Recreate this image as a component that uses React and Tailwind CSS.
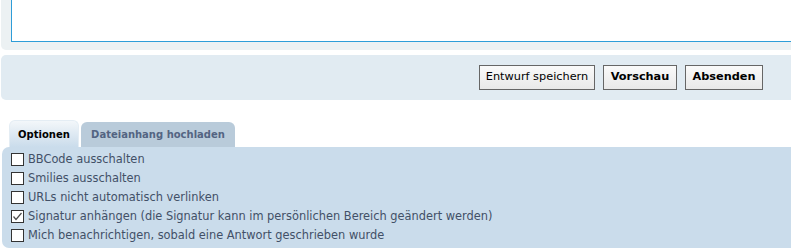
import React from 'react';

const options = [
  { label: 'BBCode ausschalten', checked: false },
  { label: 'Smilies ausschalten', checked: false },
  { label: 'URLs nicht automatisch verlinken', checked: false },
  { label: 'Signatur anhängen (die Signatur kann im persönlichen Bereich geändert werden)', checked: true },
  { label: 'Mich benachrichtigen, sobald eine Antwort geschrieben wurde', checked: false },
];

const Checkbox = ({ checked }) => (
  <span className="w-[13px] h-[13px] shrink-0 bg-white border border-[#333] flex items-center justify-center">
    {checked && (
      <svg width="11" height="11" viewBox="0 0 11 11">
        <path d="M1.5 5.5 L4 8.5 L9.5 2" fill="none" stroke="#4a4a4a" strokeWidth="1.2" />
      </svg>
    )}
  </span>
);

export default function App() {
  return (
    <div className="w-full bg-white font-['Verdana','DejaVu_Sans',sans-serif] text-[11px]">
      {/* Message panel */}
      <div className="ml-[1px] bg-[#ecf1f3] rounded-bl-[5px] pl-[10px] pb-[8px]">
        <div className="h-[42px] bg-white border-l border-b border-[#2e9dd8]" />
      </div>

      {/* Submit buttons */}
      <div className="ml-[1px] mt-[5px] h-[45px] bg-[#e1ebf2] rounded-l-[5px] flex justify-end items-start pt-[10px] pr-[28px] gap-[8px] text-[11.3px]">
        <button className="w-[116px] h-[25px] border border-[#666] bg-gradient-to-b from-[#fafafa] to-[#e9e9e9] text-black">
          Entwurf speichern
        </button>
        <button className="w-[74px] h-[25px] border border-[#666] bg-gradient-to-b from-[#fafafa] to-[#e9e9e9] text-black font-bold">
          Vorschau
        </button>
        <button className="w-[78px] h-[25px] border border-[#666] bg-gradient-to-b from-[#fafafa] to-[#e9e9e9] text-black font-bold">
          Absenden
        </button>
      </div>

      {/* Tabs */}
      <div className="mt-[20px] pl-[9px] flex items-end gap-[2px] text-[10px]">
        <div className="w-[70px] h-[27px] rounded-t-[6px] border border-b-0 border-[#e4edf4] bg-gradient-to-b from-[#f3f7fa] to-[#cadceb] flex items-center justify-center font-bold text-black">
          Optionen
        </div>
        <div className="w-[154px] h-[25px] rounded-t-[6px] bg-[#b9cbda] flex items-center justify-center font-bold text-[#536482]">
          Dateianhang hochladen
        </div>
      </div>

      {/* Options panel */}
      <div className="ml-[2px] bg-[#cadceb] rounded-l-[7px] pt-[3px] pb-[3px] pl-[9px] text-[11.4px]">
        {options.map((opt, i) => (
          <div key={i} className="h-[19px] flex items-center gap-[4px] text-[#425067]">
            <Checkbox checked={opt.checked} />
            <span>{opt.label}</span>
          </div>
        ))}
      </div>
    </div>
  );
}
